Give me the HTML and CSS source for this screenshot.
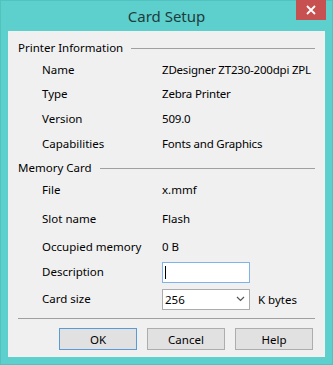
FILE: index.html
```html
<!DOCTYPE html>
<html lang="en">
<head>
    <meta charset="UTF-8">
    <meta name="viewport" content="width=device-width, initial-scale=1.0">
    <title>Card Setup</title>
    <link rel="stylesheet" href="styles.css">
</head>
<body>
    <div class="window">
        <!-- Title bar -->
        <div class="titlebar">
            <span></span>
            <span class="title">Card Setup</span>
            <button class="close" aria-label="Close">
                <svg width="10" height="10" viewBox="0 0 10 10">
                    <path d="M1 1 L9 9 M9 1 L1 9" stroke="#fff" stroke-width="1.8" fill="none"/>
                </svg>
            </button>
        </div>

        <div class="client">
            <!-- Printer information group -->
            <div class="group-title">Printer Information</div>
            <div class="fields printer">
                <span class="label">Name</span><span class="value">ZDesigner ZT230-200dpi ZPL</span>
                <span class="label">Type</span><span class="value">Zebra Printer</span>
                <span class="label">Version</span><span class="value">509.0</span>
                <span class="label">Capabilities</span><span class="value">Fonts and Graphics</span>
            </div>

            <!-- Memory card group -->
            <div class="group-title">Memory Card</div>
            <div class="fields memory">
                <span class="label">File</span><span class="value">x.mmf</span>
                <span class="label">Slot name</span><span class="value">Flash</span>
                <span class="label">Occupied memory</span><span class="value">0 B</span>
                <span class="label">Description</span>
                <div class="value">
                    <div class="textbox"><span class="caret"></span></div>
                </div>
                <span class="label">Card size</span>
                <div class="value combo-row">
                    <div class="combo">
                        <span>256</span>
                        <svg width="9" height="6" viewBox="0 0 9 6">
                            <path d="M1 1 L4.5 4.5 L8 1" stroke="#555" stroke-width="1.2" fill="none"/>
                        </svg>
                    </div>
                    <span class="unit">K bytes</span>
                </div>
            </div>

            <div class="separator"></div>

            <div class="buttons">
                <button class="btn default">OK</button>
                <button class="btn">Cancel</button>
                <button class="btn">Help</button>
            </div>
        </div>
    </div>
</body>
</html>
```

FILE: styles.css
```css
body {
    margin: 0;
    padding: 0;
    font-family: "Noto Sans", "Open Sans", sans-serif;
    font-size: 11.5px;
    color: #000;
}

.window {
    width: 333px;
    height: 365px;
    box-sizing: border-box;
    background-color: #5dcfcc;
    border: 1px solid #52c2bf;
    display: flex;
    flex-direction: column;
}

.titlebar {
    height: 30px;
    display: grid;
    grid-template-columns: 1fr auto 1fr;
    padding-right: 6px;
    padding-left: 6px;
}

.title {
    font-size: 15px;
    color: #1f3d3d;
    line-height: 30px;
}

.close {
    justify-self: end;
    width: 30px;
    height: 20px;
    margin-top: -1px;
    border: none;
    padding: 0;
    background-color: #c75050;
    display: flex;
    align-items: center;
    justify-content: center;
}

.client {
    flex: 1;
    margin: 0 7px 7px;
    background-color: #f0f0f0;
    padding: 7px 10px 7px 10px;
}

.group-title {
    display: flex;
    align-items: center;
    height: 20px;
    line-height: 20px;
    margin-bottom: 2px;
}

.group-title::after {
    content: "";
    flex: 1;
    margin-left: 8px;
    border-top: 1px solid #a0a0a0;
}

.fields {
    display: grid;
    grid-template-columns: 120px 1fr;
    align-items: start;
    padding-left: 24px;
    line-height: 20px;
}

.printer {
    grid-template-rows: 24px 25px 25px 24px;
}

.memory {
    grid-template-rows: 29px 28px 25px 27px 21px;
}

.label,
.value {
    height: 20px;
    white-space: nowrap;
}

.printer .value {
    letter-spacing: -0.2px;
}

.textbox {
    width: 88px;
    height: 21px;
    box-sizing: border-box;
    border: 1px solid #7eb4ea;
    background-color: #fff;
    padding: 3px 2px;
}

.caret {
    display: block;
    width: 1px;
    height: 13px;
    background-color: #000;
}

.combo-row {
    display: flex;
    align-items: center;
    gap: 8px;
}

.combo {
    width: 88px;
    height: 21px;
    box-sizing: border-box;
    border: 1px solid #acacac;
    background-color: #fff;
    display: flex;
    align-items: center;
    justify-content: space-between;
    padding: 0 4px 0 2px;
    line-height: 19px;
}

.unit {
    line-height: 21px;
}

.separator {
    margin-top: 8px;
    border-top: 1px solid #a0a0a0;
}

.buttons {
    display: flex;
    justify-content: flex-end;
    gap: 10px;
    margin-top: 9px;
    padding-right: 2px;
}

.btn {
    width: 78px;
    height: 22px;
    border: 1px solid #adadad;
    background-color: #e1e1e1;
    font-family: inherit;
    font-size: 11.5px;
    color: #000;
    padding: 0;
}

.btn.default {
    border-color: #5b9bd5;
}
```
